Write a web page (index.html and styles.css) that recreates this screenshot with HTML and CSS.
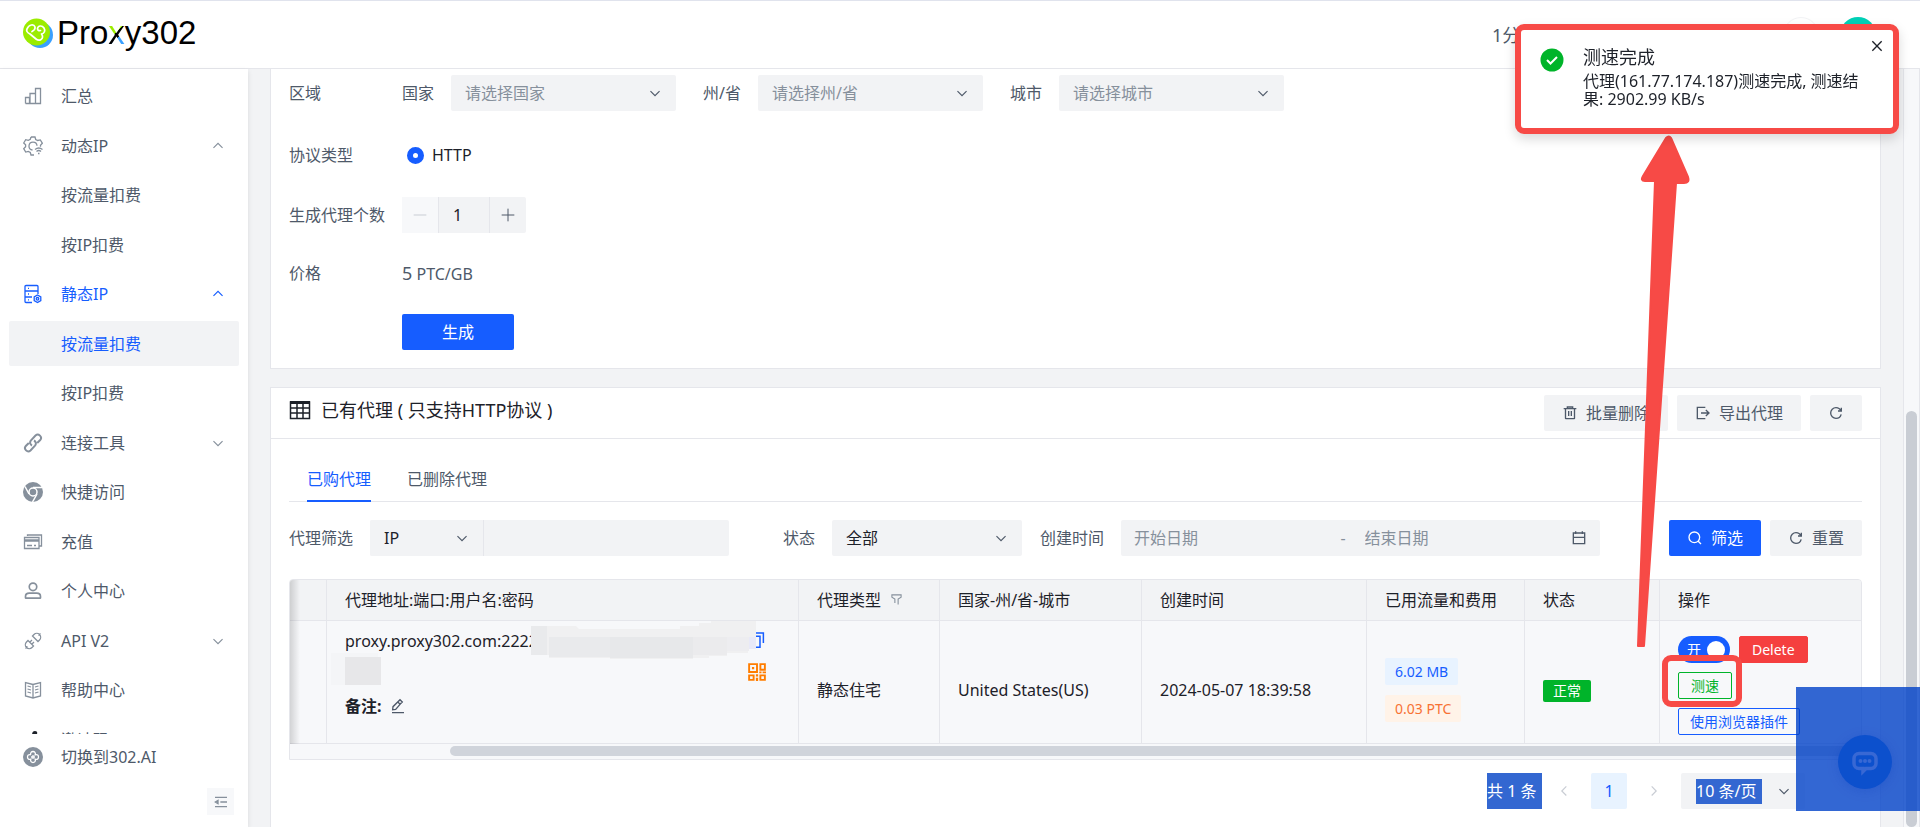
FILE: index.html
```html
<!DOCTYPE html>
<html lang="zh-CN">
<head>
<meta charset="utf-8">
<title>Proxy302</title>
<link rel="stylesheet" href="styles.css">
</head>
<body>
<svg class="sprite" aria-hidden="true">
  <symbol id="down" viewBox="0 0 48 48"><path d="M39.6 17.443 24.043 33 8.487 17.443"/></symbol>
  <symbol id="up" viewBox="0 0 48 48"><path d="M39.6 30.557 24.043 15 8.487 30.557"/></symbol>
  <symbol id="left" viewBox="0 0 48 48"><path d="M32 8.4 16.444 23.956 32 39.513"/></symbol>
  <symbol id="right" viewBox="0 0 48 48"><path d="m16 39.513 15.556-15.557L16 8.4"/></symbol>
  <symbol id="refresh" viewBox="0 0 48 48"><path d="M38.837 18C36.463 12.136 30.715 8 24 8 15.163 8 8 15.163 8 24s7.163 16 16 16c7.455 0 13.72-5.1 15.496-12M40 8v10H30"/></symbol>
</svg>

<div class="app">
  <header class="topbar">
    <a class="brand" href="#">
      <svg class="brand-mark" viewBox="0 0 32 32" aria-hidden="true">
        <circle cx="18" cy="18" r="13" fill="#39a0ff"/>
        <circle cx="14.500" cy="15" r="13.500" fill="#9bec00"/>
        <path d="M10 14.500c2-1 3.500-2 3-4.500-1-3-6-3-8 2-1 2 1 4 3 5l6 5c1.500 1.200 3.500 1.500 5 .5 2-1.500 2-3.500.5-5.500 3-.5 4-3.500 2.500-6-2-3-6-2.500-6.500.5 0 1.500 1 2.500 3 2" fill="none" stroke="#fff" stroke-width="1.700" stroke-linecap="round" stroke-linejoin="round"/>
      </svg>
      <span class="brand-name">Pro<span class="brand-x">x</span>y302</span>
    </a>
    <div class="topbar-right">
      <span class="topbar-time">1分</span>
      <button class="round-button" aria-label="语言"></button>
      <span class="avatar"></span>
    </div>
  </header>

  <div class="body">
    <aside class="sidebar">
      <nav class="menu">
        <a class="item" href="#"><svg class="nav-icon" viewBox="0 0 20 20"><path d="M2.500 17.500v-6h4v6M7 17.500v-10h5.500v10M12.500 17.500v-15h5v15zM2.500 17.500h15"/></svg>汇总</a>
        <a class="item" href="#"><svg class="nav-icon" viewBox="0 0 20 20"><path d="M8 1h4l.7 2.500 2 1 2.600-.6 2 3.300-1.800 2v1.500M11 19H8l-.7-2.500-2-1.100-2.600.7-2-3.400 1.900-1.900v-2L.7 7l2-3.300 2.600.6 2-1L8 1M9.500 14A4 4 0 1 1 14 9.800M12 13.500c2.500-2 5-2 7.500 0M13.500 15.500c1.500-1.300 3-1.300 4.500 0M15 17.500h1.500"/></svg>动态IP<svg class="caret"><use href="#up"/></svg></a>
        <a class="item" href="#"><i class="nav-icon"></i>按流量扣费</a>
        <a class="item" href="#"><i class="nav-icon"></i>按IP扣费</a>
        <a class="item current" href="#"><svg class="nav-icon" viewBox="0 0 20 20"><path d="M9 18.500H3a1 1 0 0 1-1-1v-15a1 1 0 0 1 1-1h11a1 1 0 0 1 1 1V10M2 7h13M2 13h7M5 4.300h1M5 10h1M5 15.800h1M14.500 11l3.300 1.900v3.700l-3.300 1.900-3.300-1.900v-3.700zM14.500 13.500a1.300 1.300 0 1 1 0 2.600 1.300 1.300 0 0 1 0-2.600"/></svg>静态IP<svg class="caret"><use href="#up"/></svg></a>
        <a class="item current selected" href="#"><i class="nav-icon"></i>按流量扣费</a>
        <a class="item" href="#"><i class="nav-icon"></i>按IP扣费</a>
        <a class="item" href="#"><svg class="nav-icon bold" viewBox="0 0 20 20"><path d="M9 12.500C7 11.500 6.500 9 8 7.300l4.500-4.800c3-2.700 7.300 1.500 4.700 4.500l-3 3M11 7.500c2 1 2.500 3.500 1 5.200l-4.500 4.800c-3 2.700-7.300-1.500-4.700-4.500l3-3"/></svg>连接工具<svg class="caret"><use href="#down"/></svg></a>
        <a class="item" href="#"><svg class="nav-icon" viewBox="0 0 20 20"><circle cx="10" cy="10" r="10" fill="currentColor" stroke="none"/><path d="M10 5.500h9M6 12 2 4.500M14 12l-4.500 8" stroke="#fff" stroke-width="1.500"/><circle cx="10" cy="10" r="4" fill="currentColor" stroke="#fff" stroke-width="1.500"/></svg>快捷访问</a>
        <a class="item" href="#"><svg class="nav-icon" viewBox="0 0 20 20"><path d="M4.500 4V3h14v11h-2M1.500 5.500h14.500v11H1.500zM4 13.500h5M11 13.500h2"/><path d="M1.500 8.500H16" stroke-width="2.500"/></svg>充值</a>
        <a class="item" href="#"><svg class="nav-icon" viewBox="0 0 48 48"><g stroke-width="4"><path d="M6 37c0-5 4-8 9-8h18c5 0 9 3 9 8v3a1 1 0 0 1-1 1H7a1 1 0 0 1-1-1z"/><circle cx="24" cy="14" r="9"/></g></svg>个人中心</a>
        <a class="item" href="#"><svg class="nav-icon" viewBox="0 0 20 20"><path d="m2.500 17.500 2-2M15.500 4.500l2-2M5 9.500l5.500 5.500-1.500 1.500a3.500 3.500 0 0 1-5.500-5.500zM9.500 5l5.500 5.500 1.500-1.500A3.500 3.500 0 0 0 11 3.500zM7 11l2-2M9 13l2-2"/></svg>API V2<svg class="caret"><use href="#down"/></svg></a>
        <a class="item" href="#"><svg class="nav-icon" viewBox="0 0 20 20"><path d="M10 4.500 2.500 2.500v13.500L10 18l7.500-2V2.500zM10 4.500V18M4.500 6l3.500 1M4.500 9l3.500 1M4.500 12l3.500 1M15.500 6 12 7M15.500 9 12 10M15.500 12 12 13"/></svg>帮助中心</a>
        <a class="item" href="#"><svg class="nav-icon" viewBox="0 0 20 20"><path d="M9 5q0-4 3-4 3 0 2 3z" fill="#1d2129" stroke="none"/></svg>邀请码</a>
      </nav>
      <a class="item switch-site" href="#"><svg class="nav-icon" viewBox="0 0 20 20"><circle cx="10" cy="10" r="10" fill="currentColor" stroke="none"/><path d="M7.800 7.800c-1.500-4.400 5.900-4.400 4.400 0 4.400-1.500 4.400 5.900 0 4.400 1.500 4.400-5.900 4.400-4.400 0-4.400 1.500-4.400-5.900 0-4.400M10 8v4M8 10h4" stroke="#fff" stroke-width="1.300"/></svg>切换到302.AI</a>
      <button class="fold" aria-label="收起菜单"><svg class="icon" viewBox="0 0 48 48"><path d="M42 10H6M42 24H22M42 38H6"/><path d="m15 29-8-5 8-5z" fill="currentColor"/></svg></button>
    </aside>

    <main class="content">
      <section class="card">
        <form class="form">
          <div class="row">
            <span class="row-label">区域</span>
            <div class="fields">
              <label class="field">国家<span class="pick region"><select><option>请选择国家</option></select><svg class="icon"><use href="#down"/></svg></span></label>
              <label class="field">州/省<span class="pick region"><select><option>请选择州/省</option></select><svg class="icon"><use href="#down"/></svg></span></label>
              <label class="field">城市<span class="pick region"><select><option>请选择城市</option></select><svg class="icon"><use href="#down"/></svg></span></label>
            </div>
          </div>
          <div class="row protocol">
            <span class="row-label">协议类型</span>
            <label class="radio"><input type="radio" name="protocol" checked>HTTP</label>
          </div>
          <div class="row amount">
            <label class="row-label" for="count">生成代理个数</label>
            <div class="stepper">
              <button type="button" aria-label="减少" disabled><svg class="icon" viewBox="0 0 48 48"><path d="M5 24h38"/></svg></button>
              <input id="count" type="text" value="1">
              <button type="button" aria-label="增加"><svg class="icon" viewBox="0 0 48 48"><path d="M5 24h38M24 5v38"/></svg></button>
            </div>
          </div>
          <div class="row price"><span class="row-label">价格</span><span><span class="amount-value">5</span> PTC/GB</span></div>
          <div class="row submit"><span class="row-label"></span><button class="button primary wide" type="button">生成</button></div>
        </form>
      </section>

      <section class="card list">
        <div class="card-head">
          <h2 class="card-title"><svg class="title-icon" viewBox="0 0 22 20"><path d="M1.500 2h19v16.500h-19zM1.500 8h19M1.500 13h19M8 3v15M14 3v15" fill="none" stroke="#1d2129" stroke-width="1.500"/><path d="M1 1h20v3H1z" fill="#1d2129"/></svg>已有代理 ( 只支持HTTP协议 )</h2>
          <div class="actions">
            <button class="button"><svg class="icon" viewBox="0 0 48 48"><path d="M5 11h5.500m0 0v29a1 1 0 0 0 1 1h25a1 1 0 0 0 1-1V11m-27 0H43M16 11V6h16v5M20 18v15m8-15v15"/></svg>批量删除</button>
            <button class="button"><svg class="icon" viewBox="0 0 48 48"><path d="M32.500 33 42 24l-9.500-9M18 24h24M31 41H7V7h24"/></svg>导出代理</button>
            <button class="button" aria-label="刷新"><svg class="icon"><use href="#refresh"/></svg></button>
          </div>
        </div>
        <div class="card-body">
          <div class="tabs" role="tablist">
            <button class="tab active" role="tab">已购代理</button>
            <button class="tab" role="tab">已删除代理</button>
          </div>
          <form class="filters">
            <label for="keyword">代理筛选</label>
            <div class="combo">
              <span class="pick kind"><select aria-label="筛选字段"><option>IP</option></select><svg class="icon"><use href="#down"/></svg></span>
              <input id="keyword" type="text">
            </div>
            <label class="field state">状态<span class="pick status"><select><option>全部</option></select><svg class="icon"><use href="#down"/></svg></span></label>
            <label class="created" for="from">创建时间</label>
            <div class="dates">
              <input id="from" type="text" placeholder="开始日期"><span>-</span><input type="text" placeholder="结束日期" aria-label="结束日期">
              <svg class="icon" viewBox="0 0 48 48"><path d="M7 22h34M14 4v8m20-8v8M7 41h34V9H7z"/></svg>
            </div>
            <div class="actions">
              <button class="button primary" type="button"><svg class="icon" viewBox="0 0 48 48"><circle cx="22" cy="22" r="16"/><path d="m33 33 9 9"/></svg>筛选</button>
              <button class="button" type="button"><svg class="icon"><use href="#refresh"/></svg>重置</button>
            </div>
          </form>

          <div class="table-box">
            <table class="table">
              <colgroup><col class="c-edge"><col class="c-addr"><col class="c-type"><col class="c-place"><col class="c-time"><col class="c-used"><col class="c-state"><col></colgroup>
              <thead><tr>
                <th></th><th>代理地址:端口:用户名:密码</th>
                <th>代理类型<svg class="icon funnel" viewBox="0 0 48 48"><path d="M30 42V22.500l11-7V7H7v8.500l11 7V37"/></svg></th>
                <th>国家-州/省-城市</th><th>创建时间</th><th>已用流量和费用</th><th>状态</th><th>操作</th>
              </tr></thead>
              <tbody><tr>
                <td></td>
                <td class="address-cell"><div class="address">
                  <div class="address-text">
                    <p>proxy.proxy302.com:2222</p>
                    <p class="remark"><b>备注:</b><svg class="icon" viewBox="0 0 48 48"><path d="m30 19 7-7-7-7-21 21-1 9 9-1zM24 12l6 7M6 44h36"/></svg></p>
                    <svg class="mosaic" viewBox="0 0 430 70" aria-hidden="true">
                      <path d="M200 5h45l3 3h101V5h19V2h12V0h45v28h-8v4h-21v3h-18v2h-16v1h-83v-1h-61v-3h-18z" fill="#f0f0f1"/>
                      <path d="M200 5h16v29h-16z" fill="#e9eaec"/>
                      <path d="M218 16h61v20h-61z" fill="#e9eaec"/><path d="M279 16h83v21h-83z" fill="#e7e8ea"/><path d="M362 16h34v18h-34z" fill="#ebebed"/><path d="M396 16h22v14h-22z" fill="#ededf0"/><path d="M418 16h7v12h-7z" fill="#e8e9f8"/>
                      <path d="M0 32h47v5H14v27H0z" fill="#f4f5f7"/><path d="M14 36h36v28H14z" fill="#e7e7e9"/>
                    </svg>
                  </div>
                  <div class="address-tools">
                    <button class="bare copy" aria-label="复制"><svg class="icon" viewBox="0 0 48 48"><path d="M20 5h21v27M8 14h24v29H8z"/></svg></button>
                    <button class="bare qr" aria-label="二维码"><svg class="icon" viewBox="0 0 16 16"><path d="M1 1h7v7H1zM11 1h4v5h-4zM1 11h4v4H1zM11 11h4v4h-4z" stroke-width="1.700"/><path d="M3.500 3.500h2v2h-2zM7 10h2v2H7zM7 13h2v3H7zM10 7.500h2v1.500h-2zM13 7.500h3v1.500h-3z" fill="currentColor" stroke="none"/></svg></button>
                  </div>
                </div></td>
                <td>静态住宅</td><td>United States(US)</td><td>2024-05-07 18:39:58</td>
                <td><div class="tags"><span class="tag blue">6.02 MB</span><span class="tag orange">0.03 PTC</span></div></td>
                <td><span class="badge">正常</span></td>
                <td class="ops-cell"><div class="ops">
                  <div class="ops-line"><button class="switch" role="switch" aria-checked="true">开<i></i></button><button class="small danger">Delete</button></div>
                  <div class="ops-line speed"><button class="small green">测速</button><span class="frame"></span></div>
                  <button class="small outline">使用浏览器插件</button>
                </div></td>
              </tr></tbody>
            </table>
            <span class="edge-shade"></span>
            <div class="h-scroll"><span class="h-thumb"></span></div>
          </div>

          <div class="pagination">
            <span class="total">共 1 条</span>
            <div class="pager">
              <button class="page" aria-label="上一页" disabled><svg class="icon"><use href="#left"/></svg></button>
              <button class="page active">1</button>
              <button class="page" aria-label="下一页" disabled><svg class="icon"><use href="#right"/></svg></button>
              <span class="pick size"><select aria-label="每页条数"><option>10 条/页</option></select><svg class="icon"><use href="#down"/></svg></span>
            </div>
          </div>
        </div>
      </section>
    </main>
    <div class="v-scroll"><span class="v-thumb"></span></div>
  </div>
</div>

<div class="chat-area"><button class="chat" aria-label="在线客服"><svg viewBox="0 0 30 30"><path d="M9 6.500h12a5 5 0 0 1 5 5v5a5 5 0 0 1-5 5h-5l-3 3v-3H9a5 5 0 0 1-5-5v-5a5 5 0 0 1 5-5z" fill="none" stroke="#3868d4" stroke-width="3.500"/><g fill="#3868d4"><circle cx="10.500" cy="14" r="2"/><circle cx="15" cy="14" r="2"/><circle cx="19.500" cy="14" r="2"/></g></svg></button></div>

<svg class="arrow" viewBox="0 0 60 520" aria-hidden="true"><path d="M28 5 5 44q-2 5 3 5h9L-.500 513" fill="none"/><path d="M29 5 6 43q-3 5 2 5h10L1 513h6L39 50h8q6 0 4-6L34 5q-2-3-5 0z" fill="#f74a46" stroke="#f74a46" stroke-width="2" stroke-linejoin="round"/></svg>

<div class="toast" role="alert">
  <svg class="toast-icon" viewBox="0 0 24 24" aria-hidden="true"><circle cx="12" cy="12" r="11.500" fill="#00b42a"/><path d="m7 12 3.500 3.500L17 9" fill="none" stroke="#fff" stroke-width="2"/></svg>
  <div class="toast-text"><strong>测速完成</strong><p>代理(161.77.174.187)测速完成, 测速结果: 2902.99 KB/s</p></div>
  <button class="bare toast-close" aria-label="关闭"><svg class="icon" viewBox="0 0 48 48"><path d="m10 10 28 28m0-28L10 38"/></svg></button>
</div>
</body>
</html>
```

FILE: styles.css
```css
* { box-sizing: border-box; }

body {
  margin: 0;
  font: 400 16px/24px "Noto Sans", "Noto Sans CJK SC", sans-serif;
  color: #1d2129;
  background: #f2f3f5;
  overflow: hidden;
}

button, input, select { font: inherit; color: inherit; border: 0; margin: 0; padding: 0; background: none; }
button { cursor: pointer; }
a { color: inherit; text-decoration: none; }
p { margin: 0; }
.sprite { display: none; }
.bare { display: flex; }

.icon { width: 16px; height: 16px; flex: none; fill: none; stroke: currentColor; stroke-width: 4; }

.app { display: flex; flex-direction: column; height: 100vh; }

/* top bar */
.topbar {
  display: flex;
  align-items: center;
  justify-content: space-between;
  flex: none;
  height: 69px;
  padding: 0 44px 0 22px;
  background: #fff;
  border-top: 1px solid #e0e3ed;
  border-bottom: 1px solid #e5e6eb;
}
.brand { display: flex; align-items: center; gap: 3px; padding-bottom: 4px; }
.brand-mark { width: 32px; height: 32px; }
.brand-name { font: 400 33px/40px "Liberation Sans", Arial, sans-serif; color: #000; }
.brand-x {
  background: linear-gradient(135deg, #9bec00 49%, #000 50%, #000 61%, #39a0ff 62%);
  -webkit-background-clip: text;
  background-clip: text;
  color: transparent;
}
.topbar-right { display: flex; align-items: center; gap: 21px; color: #4e5969; }
.topbar-time { width: 270px; font-size: 18px; }
.round-button { width: 36px; height: 36px; border: 1px solid #f2f3f5; border-radius: 50%; }
.avatar { width: 36px; height: 36px; border-radius: 50%; background: #00d0b6; }

.body { display: flex; flex: 1; min-height: 0; }

/* sidebar */
.sidebar {
  display: flex;
  flex-direction: column;
  flex: none;
  width: 248px;
  background: #fff;
  box-shadow: 0 2px 5px rgba(0, 0, 0, .1);
  color: #4e5969;
}
.menu { flex: 1; min-height: 0; overflow: hidden; padding: 4px 9px 0; }
.item {
  display: flex;
  align-items: center;
  gap: 18px;
  height: 45px;
  padding: 0 14px 0 14px;
  border-radius: 2px;
}
.menu .item { margin-bottom: 4px; }
.menu .item:nth-child(odd) { margin-bottom: 5px; }
.nav-icon { width: 20px; height: 20px; flex: none; fill: none; stroke: currentColor; stroke-width: 1.3; color: #86909c; }
.nav-icon.bold { stroke-width: 2; }
.caret { width: 14px; height: 14px; margin-left: auto; fill: none; stroke: #86909c; stroke-width: 4; }
.current, .current .nav-icon { color: #165dff; }
.current .caret { stroke: #165dff; }
.selected { background: #f2f3f5; }
.switch-site { margin: 0 9px 9px; }
.fold {
  display: flex;
  align-items: center;
  justify-content: center;
  align-self: flex-end;
  width: 27px;
  height: 27px;
  margin: 0 14px 12px 0;
  background: #f7f8fa;
  color: #86909c;
}

/* content */
.content { flex: 1; min-width: 0; padding: 0 22px; overflow: hidden; }
.card { background: #fff; border: 1px solid #e5e6eb; border-top: 0; }
.list { margin-top: 18px; border-top: 1px solid #e5e6eb; min-height: 460px; }

.form { padding: 6px 18px 18px; color: #4e5969; }
.row { display: flex; align-items: center; min-height: 36px; }
.row-label { flex: none; width: 113px; }
.fields { display: flex; gap: 27px; }
.field { display: flex; align-items: center; gap: 17px; }
.protocol { margin-top: 26px; }
.amount, .price { margin-top: 24px; }
.price { min-height: 32px; }
.submit { margin-top: 25px; }
.amount-value { font-size: 18px; }

.pick { display: flex; align-items: center; position: relative; height: 36px; background: #f2f3f5; border-radius: 2px; }
.pick select { appearance: none; width: 100%; height: 100%; padding: 0 36px 0 14px; color: #1d2129; }
.pick .icon { position: absolute; right: 14px; width: 14px; height: 14px; color: #4e5969; pointer-events: none; }
.region { width: 225px; }
.pick.region select { color: #86909c; }
.status { width: 190px; }
.kind { width: 113px; }

.radio { display: flex; align-items: center; gap: 8px; padding-left: 5px; color: #1d2129; }
.radio input { appearance: none; width: 17px; height: 17px; border: 6px solid #165dff; border-radius: 50%; }

.stepper { display: flex; height: 36px; background: #f2f3f5; border-radius: 2px; }
.stepper button { display: flex; align-items: center; justify-content: center; width: 36px; }
.stepper button .icon { stroke-width: 3; }
.stepper button:disabled { background: #f7f8fa; color: #c9cdd4; }
.stepper input { width: 52px; padding: 0 14px; border: solid #e5e6eb; border-width: 0 1px; color: #1d2129; }

.button {
  display: flex;
  align-items: center;
  justify-content: center;
  gap: 8px;
  height: 36px;
  padding: 0 18px;
  border-radius: 2px;
  background: #f2f3f5;
  color: #4e5969;
  white-space: nowrap;
}
.primary { background: #165dff; color: #fff; }
.wide { width: 112px; }
.actions { display: flex; gap: 9px; }

.card-head { display: flex; justify-content: space-between; padding: 7px 18px; border-bottom: 1px solid #e5e6eb; }
.card-head .button:last-child { width: 52px; }
.card-title { display: flex; align-items: center; gap: 10px; margin: 0; height: 30px; font-size: 18px; font-weight: 400; }
.title-icon { width: 22px; height: 20px; }
.card-body { padding: 18px; }

.tabs { display: flex; gap: 36px; padding: 0 18px; box-shadow: inset 0 -1px #e5e6eb; }
.tab { padding: 10px 0 9px; border-bottom: 2px solid transparent; color: #4e5969; }
.tab.active { border-color: #165dff; color: #165dff; }

.filters { display: flex; align-items: center; margin-top: 18px; color: #4e5969; }
.combo { display: flex; width: 359px; height: 36px; margin-left: 17px; background: #f2f3f5; border-radius: 2px; }
.combo input { flex: 1; min-width: 0; padding: 0 14px; border-left: 1px solid #e5e6eb; }
.state { margin-left: 54px; }
.created { margin: 0 17px 0 18px; }
.dates { display: flex; align-items: center; flex: 1; min-width: 0; height: 36px; margin-right: 69px; padding: 0 13px; background: #f2f3f5; border-radius: 2px; color: #86909c; }
.dates input { flex: 1; min-width: 0; }
.dates input + span { width: 24px; }
.dates input::placeholder { color: #86909c; }
.dates .icon { color: #4e5969; }

/* table */
.table-box { position: relative; margin-top: 23px; border: 1px solid #e5e6eb; border-radius: 4px 4px 0 0; background: #f7f8fa; overflow: hidden; }
.table { width: 100%; table-layout: fixed; border-collapse: separate; border-spacing: 0; }
.c-edge { width: 37px; }
.c-addr { width: 472px; }
.c-type { width: 141px; }
.c-place { width: 202px; }
.c-time { width: 225px; }
.c-used { width: 158px; }
.c-state { width: 135px; }
.table th, .table td { padding: 0 18px; text-align: left; font-weight: 400; border: solid #e5e6eb; border-width: 0 1px 1px 0; }
.table th:last-child, .table td:last-child { border-right: 0; }
.table th { height: 41px; background: #f2f3f5; white-space: nowrap; }
.table td { height: 123px; padding-top: 16px; }
.funnel { width: 13px; height: 13px; margin-left: 9px; color: #86909c; }
.table .address-cell { padding-top: 8px; vertical-align: top; }
.address { display: flex; justify-content: space-between; padding-right: 14px; }
.address-text { position: relative; flex: 1; min-width: 0; }
.remark { display: flex; align-items: center; gap: 8px; margin-top: 41px; }
.remark .icon { color: #4e5969; }
.mosaic { position: absolute; left: -14px; top: -8px; width: 430px; height: 70px; }
.address-tools { display: flex; flex-direction: column; gap: 14px; padding-top: 2px; }
.copy { color: #165dff; }
.qr { color: #ff7d00; }
.address-tools .icon { width: 18px; height: 18px; }
.tags { display: flex; flex-direction: column; align-items: flex-start; gap: 10px; }
.tag { padding: 0 10px; border-radius: 2px; font-size: 14px; line-height: 27px; }
.blue { background: #e8f3ff; color: #165dff; }
.orange { background: #fff3e8; color: #f77234; }
.badge { display: inline-block; padding: 0 10px; border-radius: 2px; background: #00b42a; color: #fff; font-size: 14px; line-height: 22px; vertical-align: middle; }
.table .ops-cell { padding-top: 15px; vertical-align: top; }
.ops { display: flex; flex-direction: column; align-items: flex-start; gap: 9px; }
.ops-line { display: flex; gap: 9px; }
.speed { position: relative; }
.frame { position: absolute; inset: -17px -10px -8px -16px; border: 6px solid #f74a46; border-radius: 9px; pointer-events: none; }
.switch { display: flex; align-items: center; justify-content: space-between; width: 52px; height: 27px; padding: 0 5px 0 9px; border-radius: 14px; background: #165dff; color: #fff; font-size: 14px; }
.switch i { width: 18px; height: 18px; border-radius: 50%; background: #fff; }
.small { height: 27px; padding: 0 12px; border: 1px solid; border-radius: 2px; font-size: 14px; line-height: 24px; white-space: nowrap; }
.danger { border-color: #f53f3f; background: #f53f3f; color: #fff; }
.green { color: #00b42a; }
.outline { padding: 0 11px; color: #165dff; }
.edge-shade { position: absolute; left: 0; top: 0; bottom: 15px; width: 10px; background: linear-gradient(90deg, rgba(0, 0, 0, .15), transparent); }
.h-scroll { padding: 2px 0 3px 160px; }
.h-thumb { display: block; height: 10px; border-radius: 5px; background: #d0d4db; }

/* pagination */
.pagination { display: flex; justify-content: flex-end; gap: 4px; margin-top: 13px; padding-right: 57px; }
.total { width: 55px; line-height: 36px; background: #3367d1; color: #fff; white-space: nowrap; }
.pager { display: flex; gap: 9px; }
.page { display: flex; align-items: center; justify-content: center; width: 36px; height: 36px; border-radius: 2px; }
.page .icon { width: 14px; height: 14px; }
.page.active { background: #e8f3ff; color: #165dff; }
.page:disabled { color: #c9cdd4; }
.size { width: 124px; }
.pick.size select { color: #fff; background: linear-gradient(#3367d1, #3367d1) 15px 6px / 66px 25px no-repeat; padding: 0 36px 0 15px; }

.v-scroll { position: relative; flex: none; width: 17px; border: solid #e5e6eb; border-width: 0 1px; background: #f7f8fa; }
.v-thumb { position: absolute; left: 2px; top: 342px; bottom: 0; width: 11px; border-radius: 6px; background: #c9cdd4; }

/* floating layers */
.chat-area { position: fixed; right: 0; bottom: 16px; width: 124px; height: 124px; padding: 48px 0 0 42px; background: rgba(0, 65, 200, .8); }
.chat { display: flex; align-items: center; justify-content: center; width: 54px; height: 54px; border-radius: 50%; background: #0c50cd; box-shadow: 0 2px 12px rgba(0, 50, 180, .2); }
.chat svg { width: 30px; height: 30px; }
.arrow { position: fixed; right: 223px; top: 133px; width: 60px; height: 520px; pointer-events: none; }
.toast {
  position: fixed;
  top: 24px;
  right: 21px;
  display: flex;
  gap: 19px;
  width: 384px;
  min-height: 110px;
  padding: 18px 33px 18px 19px;
  border: 6px solid #f74a46;
  border-radius: 9px;
  background: #fff;
  box-shadow: 0 5px 12px rgba(0, 0, 0, .15);
}
.toast-icon { flex: none; width: 24px; height: 24px; }
.toast-text { line-height: 18px; }
.toast-text strong { display: block; margin: -1px 0 5px; font-size: 18px; line-height: 20px; font-weight: 400; }
.toast-close { position: absolute; top: 8px; right: 8px; }
```
